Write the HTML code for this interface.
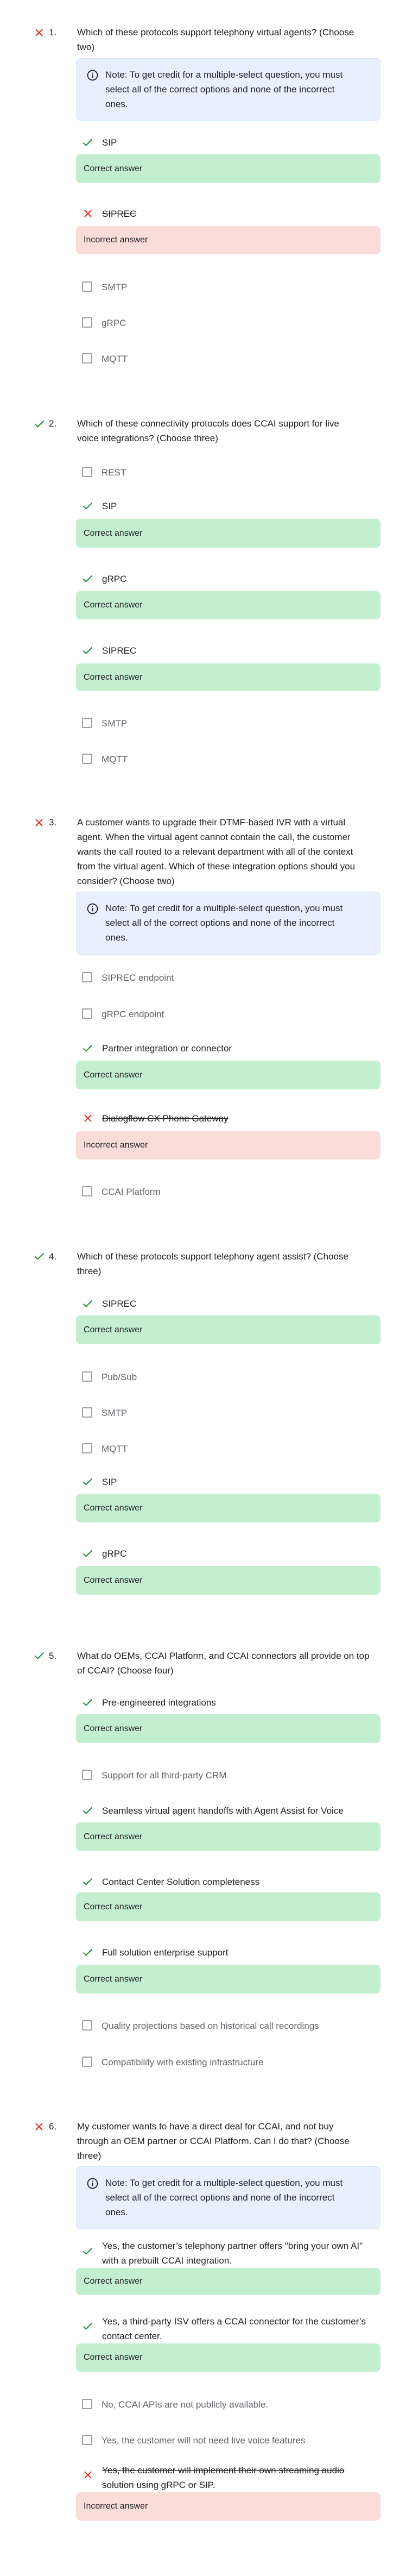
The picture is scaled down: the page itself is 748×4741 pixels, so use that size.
<!DOCTYPE html>
<html><head><meta charset="utf-8"><style>
*{margin:0;padding:0;box-sizing:border-box}
body{width:748px;height:4741px;background:#fff;position:relative;font-family:"Liberation Sans",Arial,sans-serif;color:#202124;overflow:hidden}
.t{position:absolute;white-space:nowrap;font-size:17px;line-height:27px}
.q{left:142px}
.n{left:90px}
.o{left:188px}
.u{left:187px;color:#5f6368}
.s{text-decoration:line-through}
.ck{position:absolute;left:151px;width:19px;height:19px;border:2px solid #a0a0a0;border-radius:2px}
.box{position:absolute;left:140px;width:561px;border-radius:8px;font-size:16px;padding-left:14px}
.g{background:#c4eed0}
.r{background:#fadcd9}
.note{position:absolute;left:140px;width:561px;background:#e8f0fe;border:1px solid #d2e3fc;border-radius:8px}
.nt{left:194px}
svg{position:absolute}
</style></head><body>

<!-- Q1 -->
<svg style="left:64px;top:52px" width="16" height="16" viewBox="0 0 16 16"><path d="M2 2L14 14M14 2L2 14" stroke="#d93025" stroke-width="2" fill="none"/></svg>
<div class="t n" style="top:46px">1.</div>
<div class="t q" style="top:46px">Which of these protocols support telephony virtual agents? (Choose<br>two)</div>
<div class="note" style="top:107px;height:115px"></div>
<svg style="left:160px;top:128px" width="21" height="21" viewBox="0 0 20 20"><circle cx="10" cy="10" r="8.5" stroke="#202124" stroke-width="1.7" fill="none"/><rect x="9.1" y="8.5" width="1.8" height="6" fill="#202124"/><rect x="9.1" y="5.2" width="1.8" height="1.8" fill="#202124"/></svg>
<div class="t nt" style="top:124px">Note: To get credit for a multiple-select question, you must<br>select all of the correct options and none of the incorrect<br>ones.</div>
<svg style="left:152px;top:255px" width="19" height="15" viewBox="0 0 19 15"><path d="M1.5 7.5L6.5 12.5L17.5 1.5" stroke="#1e8e3e" stroke-width="2" fill="none"/></svg>
<div class="t o" style="top:249px">SIP</div>
<div class="box g" style="top:284px;height:53px;line-height:53px">Correct answer</div>
<svg style="left:154px;top:385px" width="16" height="16" viewBox="0 0 16 16"><path d="M2 2L14 14M14 2L2 14" stroke="#d93025" stroke-width="2" fill="none"/></svg>
<div class="t o s" style="top:380px">SIPREC</div>
<div class="box r" style="top:416px;height:52px;line-height:52px">Incorrect answer</div>
<div class="ck" style="top:518px"></div><div class="t u" style="top:515px">SMTP</div>
<div class="ck" style="top:584px"></div><div class="t u" style="top:581px">gRPC</div>
<div class="ck" style="top:650px"></div><div class="t u" style="top:647px">MQTT</div>

<!-- Q2 -->
<svg style="left:63px;top:773px" width="19" height="15" viewBox="0 0 19 15"><path d="M1.5 7.5L6.5 12.5L17.5 1.5" stroke="#1e8e3e" stroke-width="2" fill="none"/></svg>
<div class="t n" style="top:766px">2.</div>
<div class="t q" style="top:766px">Which of these connectivity protocols does CCAI support for live<br>voice integrations? (Choose three)</div>
<div class="ck" style="top:859px"></div><div class="t u" style="top:856px">REST</div>
<svg style="left:152px;top:924px" width="19" height="15" viewBox="0 0 19 15"><path d="M1.5 7.5L6.5 12.5L17.5 1.5" stroke="#1e8e3e" stroke-width="2" fill="none"/></svg>
<div class="t o" style="top:918px">SIP</div>
<div class="box g" style="top:955px;height:53px;line-height:53px">Correct answer</div>
<svg style="left:152px;top:1058px" width="19" height="15" viewBox="0 0 19 15"><path d="M1.5 7.5L6.5 12.5L17.5 1.5" stroke="#1e8e3e" stroke-width="2" fill="none"/></svg>
<div class="t o" style="top:1052px">gRPC</div>
<div class="box g" style="top:1088px;height:52px;line-height:52px">Correct answer</div>
<svg style="left:152px;top:1190px" width="19" height="15" viewBox="0 0 19 15"><path d="M1.5 7.5L6.5 12.5L17.5 1.5" stroke="#1e8e3e" stroke-width="2" fill="none"/></svg>
<div class="t o" style="top:1184px">SIPREC</div>
<div class="box g" style="top:1221px;height:51px;line-height:51px">Correct answer</div>
<div class="ck" style="top:1321px"></div><div class="t u" style="top:1318px">SMTP</div>
<div class="ck" style="top:1387px"></div><div class="t u" style="top:1384px">MQTT</div>

<!-- Q3 -->
<svg style="left:64px;top:1506px" width="16" height="16" viewBox="0 0 16 16"><path d="M2 2L14 14M14 2L2 14" stroke="#d93025" stroke-width="2" fill="none"/></svg>
<div class="t n" style="top:1500px">3.</div>
<div class="t q" style="top:1500px">A customer wants to upgrade their DTMF-based IVR with a virtual<br>agent. When the virtual agent cannot contain the call, the customer<br>wants the call routed to a relevant department with all of the context<br>from the virtual agent. Which of these integration options should you<br>consider? (Choose two)</div>
<div class="note" style="top:1641px;height:116px"></div>
<svg style="left:160px;top:1662px" width="21" height="21" viewBox="0 0 20 20"><circle cx="10" cy="10" r="8.5" stroke="#202124" stroke-width="1.7" fill="none"/><rect x="9.1" y="8.5" width="1.8" height="6" fill="#202124"/><rect x="9.1" y="5.2" width="1.8" height="1.8" fill="#202124"/></svg>
<div class="t nt" style="top:1658px">Note: To get credit for a multiple-select question, you must<br>select all of the correct options and none of the incorrect<br>ones.</div>
<div class="ck" style="top:1789px"></div><div class="t u" style="top:1786px">SIPREC endpoint</div>
<div class="ck" style="top:1856px"></div><div class="t u" style="top:1853px">gRPC endpoint</div>
<svg style="left:152px;top:1922px" width="19" height="15" viewBox="0 0 19 15"><path d="M1.5 7.5L6.5 12.5L17.5 1.5" stroke="#1e8e3e" stroke-width="2" fill="none"/></svg>
<div class="t o" style="top:1916px">Partner integration or connector</div>
<div class="box g" style="top:1952px;height:53px;line-height:53px">Correct answer</div>
<svg style="left:154px;top:2050px" width="16" height="16" viewBox="0 0 16 16"><path d="M2 2L14 14M14 2L2 14" stroke="#d93025" stroke-width="2" fill="none"/></svg>
<div class="t o s" style="top:2045px">Dialogflow CX Phone Gateway</div>
<div class="box r" style="top:2082px;height:52px;line-height:52px">Incorrect answer</div>
<div class="ck" style="top:2183px"></div><div class="t u" style="top:2180px">CCAI Platform</div>

<!-- Q4 -->
<svg style="left:63px;top:2305px" width="19" height="15" viewBox="0 0 19 15"><path d="M1.5 7.5L6.5 12.5L17.5 1.5" stroke="#1e8e3e" stroke-width="2" fill="none"/></svg>
<div class="t n" style="top:2299px">4.</div>
<div class="t q" style="top:2299px">Which of these protocols support telephony agent assist? (Choose<br>three)</div>
<svg style="left:152px;top:2392px" width="19" height="15" viewBox="0 0 19 15"><path d="M1.5 7.5L6.5 12.5L17.5 1.5" stroke="#1e8e3e" stroke-width="2" fill="none"/></svg>
<div class="t o" style="top:2386px">SIPREC</div>
<div class="box g" style="top:2421px;height:53px;line-height:53px">Correct answer</div>
<div class="ck" style="top:2524px"></div><div class="t u" style="top:2521px">Pub/Sub</div>
<div class="ck" style="top:2590px"></div><div class="t u" style="top:2587px">SMTP</div>
<div class="ck" style="top:2656px"></div><div class="t u" style="top:2653px">MQTT</div>
<svg style="left:152px;top:2720px" width="19" height="15" viewBox="0 0 19 15"><path d="M1.5 7.5L6.5 12.5L17.5 1.5" stroke="#1e8e3e" stroke-width="2" fill="none"/></svg>
<div class="t o" style="top:2714px">SIP</div>
<div class="box g" style="top:2749px;height:53px;line-height:53px">Correct answer</div>
<svg style="left:152px;top:2852px" width="19" height="15" viewBox="0 0 19 15"><path d="M1.5 7.5L6.5 12.5L17.5 1.5" stroke="#1e8e3e" stroke-width="2" fill="none"/></svg>
<div class="t o" style="top:2846px">gRPC</div>
<div class="box g" style="top:2882px;height:53px;line-height:53px">Correct answer</div>

<!-- Q5 -->
<svg style="left:63px;top:3040px" width="19" height="15" viewBox="0 0 19 15"><path d="M1.5 7.5L6.5 12.5L17.5 1.5" stroke="#1e8e3e" stroke-width="2" fill="none"/></svg>
<div class="t n" style="top:3034px">5.</div>
<div class="t q" style="top:3034px">What do OEMs, CCAI Platform, and CCAI connectors all provide on top<br>of CCAI? (Choose four)</div>
<svg style="left:152px;top:3126px" width="19" height="15" viewBox="0 0 19 15"><path d="M1.5 7.5L6.5 12.5L17.5 1.5" stroke="#1e8e3e" stroke-width="2" fill="none"/></svg>
<div class="t o" style="top:3120px">Pre-engineered integrations</div>
<div class="box g" style="top:3155px;height:53px;line-height:53px">Correct answer</div>
<div class="ck" style="top:3257px"></div><div class="t u" style="top:3254px">Support for all third-party CRM</div>
<svg style="left:152px;top:3325px" width="19" height="15" viewBox="0 0 19 15"><path d="M1.5 7.5L6.5 12.5L17.5 1.5" stroke="#1e8e3e" stroke-width="2" fill="none"/></svg>
<div class="t o" style="top:3319px">Seamless virtual agent handoffs with Agent Assist for Voice</div>
<div class="box g" style="top:3354px;height:53px;line-height:53px">Correct answer</div>
<svg style="left:152px;top:3456px" width="19" height="15" viewBox="0 0 19 15"><path d="M1.5 7.5L6.5 12.5L17.5 1.5" stroke="#1e8e3e" stroke-width="2" fill="none"/></svg>
<div class="t o" style="top:3450px">Contact Center Solution completeness</div>
<div class="box g" style="top:3483px;height:53px;line-height:53px">Correct answer</div>
<svg style="left:152px;top:3586px" width="19" height="15" viewBox="0 0 19 15"><path d="M1.5 7.5L6.5 12.5L17.5 1.5" stroke="#1e8e3e" stroke-width="2" fill="none"/></svg>
<div class="t o" style="top:3580px">Full solution enterprise support</div>
<div class="box g" style="top:3616px;height:53px;line-height:53px">Correct answer</div>
<div class="ck" style="top:3718px"></div><div class="t u" style="top:3715px">Quality projections based on historical call recordings</div>
<div class="ck" style="top:3785px"></div><div class="t u" style="top:3782px">Compatibility with existing infrastructure</div>

<!-- Q6 -->
<svg style="left:64px;top:3906px" width="16" height="16" viewBox="0 0 16 16"><path d="M2 2L14 14M14 2L2 14" stroke="#d93025" stroke-width="2" fill="none"/></svg>
<div class="t n" style="top:3900px">6.</div>
<div class="t q" style="top:3900px">My customer wants to have a direct deal for CCAI, and not buy<br>through an OEM partner or CCAI Platform. Can I do that? (Choose<br>three)</div>
<div class="note" style="top:3987px;height:116px"></div>
<svg style="left:160px;top:4008px" width="21" height="21" viewBox="0 0 20 20"><circle cx="10" cy="10" r="8.5" stroke="#202124" stroke-width="1.7" fill="none"/><rect x="9.1" y="8.5" width="1.8" height="6" fill="#202124"/><rect x="9.1" y="5.2" width="1.8" height="1.8" fill="#202124"/></svg>
<div class="t nt" style="top:4004px">Note: To get credit for a multiple-select question, you must<br>select all of the correct options and none of the incorrect<br>ones.</div>
<svg style="left:152px;top:4136px" width="19" height="15" viewBox="0 0 19 15"><path d="M1.5 7.5L6.5 12.5L17.5 1.5" stroke="#1e8e3e" stroke-width="2" fill="none"/></svg>
<div class="t o" style="top:4120px">Yes, the customer’s telephony partner offers "bring your own AI"<br>with a prebuilt CCAI integration.</div>
<div class="box g" style="top:4174px;height:50px;line-height:50px">Correct answer</div>
<svg style="left:152px;top:4274px" width="19" height="15" viewBox="0 0 19 15"><path d="M1.5 7.5L6.5 12.5L17.5 1.5" stroke="#1e8e3e" stroke-width="2" fill="none"/></svg>
<div class="t o" style="top:4259px">Yes, a third-party ISV offers a CCAI connector for the customer’s<br>contact center.</div>
<div class="box g" style="top:4313px;height:52px;line-height:52px">Correct answer</div>
<div class="ck" style="top:4415px"></div><div class="t u" style="top:4412px">No, CCAI APIs are not publicly available.</div>
<div class="ck" style="top:4481px"></div><div class="t u" style="top:4478px">Yes, the customer will not need live voice features</div>
<svg style="left:154px;top:4547px" width="16" height="16" viewBox="0 0 16 16"><path d="M2 2L14 14M14 2L2 14" stroke="#d93025" stroke-width="2" fill="none"/></svg>
<div class="t o s" style="top:4533px">Yes, the customer will implement their own streaming audio<br>solution using gRPC or SIP.</div>
<div class="box r" style="top:4587px;height:52px;line-height:52px">Incorrect answer</div>

</body></html>
